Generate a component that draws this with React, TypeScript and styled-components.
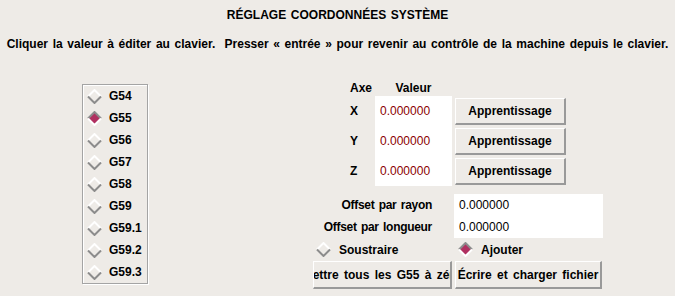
import * as React from 'react'
import styled, { createGlobalStyle } from 'styled-components'

const GlobalStyle = createGlobalStyle`
  html, body {
    margin: 0;
    padding: 0;
    background: #eeebe7;
  }
  body {
    font-family: "Liberation Sans", Arial, sans-serif;
    font-size: 12px;
    font-weight: bold;
    word-spacing: 1.3px;
    color: #000;
  }
`

const Page = styled.div`
  width: 675px;
  height: 296px;
  overflow: hidden;
  background: #eeebe7;
`
const Title = styled.div`
  padding-top: 7px;
  line-height: 16px;
  text-align: center;
`
const Hint = styled.div`
  margin-top: 13px;
  line-height: 16px;
  text-align: center;
  white-space: nowrap;
`
const Main = styled.div`
  display: flex;
  align-items: flex-start;
  margin-top: 27px;
  padding-left: 82px;
`
const SystemBox = styled.div`
  margin-top: 5px;
  width: 64px;
  height: 198px;
  display: flex;
  flex-direction: column;
  border: 1px solid #a4a4a4;
  box-shadow: inset 1px 1px 0 #fff, 1px 1px 0 #fff;
`
const SystemItem = styled.div`
  height: 22px;
  display: flex;
  align-items: center;
  gap: 7px;
  padding-left: 4px;
  white-space: nowrap;
`
const Right = styled.div`
  margin-left: 165px;
  width: 290px;
  display: flex;
  flex-direction: column;
`
const AxisTable = styled.div`
  margin-left: 32px;
  display: grid;
  grid-template-columns: 30px 77px 114px;
  grid-template-rows: 17px repeat(3, 30px);
`
const Head = styled.div<{ $align?: string }>`
  display: flex;
  align-items: center;
  justify-content: ${p => p.$align || 'center'};
  padding-left: ${p => (p.$align ? '5px' : '0')};
`
const AxisLabel = styled.div`
  display: flex;
  align-items: center;
  padding-left: 5px;
`
const ValueCell = styled.div<{ $color?: string }>`
  background: #fff;
  display: flex;
  align-items: center;
  padding-left: 5px;
  font-weight: normal;
  word-spacing: normal;
  color: ${p => p.$color || '#000'};
`
const ButtonCell = styled.div`
  display: flex;
  align-items: center;
  padding-left: 3px;
`
const Button = styled.button<{ $width: number; $height: number }>`
  width: ${p => p.$width}px;
  height: ${p => p.$height}px;
  padding: 0;
  margin: 0;
  display: flex;
  align-items: center;
  justify-content: center;
  overflow: hidden;
  white-space: nowrap;
  font: inherit;
  word-spacing: 2px;
  color: #000;
  background: #eeebe7;
  border-style: solid;
  border-width: 1px 2px 2px 1px;
  border-color: #fff #999 #999 #fff;
  box-sizing: border-box;
`
const ButtonText = styled.span`
  flex: none;
`
const OffsetTable = styled.div`
  margin-top: 8px;
  display: grid;
  grid-template-columns: 139px 2px 149px;
  grid-template-rows: 22px 22px;
`
const OffsetLabel = styled.div`
  display: flex;
  align-items: center;
  justify-content: flex-end;
  padding-right: 20px;
  letter-spacing: -0.3px;
  white-space: nowrap;
`
const Gap = styled.div``
const ModeRow = styled.div`
  height: 23px;
  display: grid;
  grid-template-columns: 142px 148px;
`
const ModeOption = styled.div`
  display: flex;
  align-items: center;
  gap: 8px;
  padding-left: 3px;
`
const ActionRow = styled.div`
  height: 28px;
  display: flex;
  gap: 3px;
`

const Diamond = ({ selected }: { selected?: boolean }) => (
  <svg width="15" height="15" viewBox="0 0 15 15" style={{ flex: 'none' }}>
    <polygon
      points="7.5,1 14,7.5 7.5,14 1,7.5"
      fill={selected ? '#b03060' : '#eeebe7'}
    />
    <polyline
      points="1,7.5 7.5,1 14,7.5"
      fill="none"
      stroke={selected ? '#8c8c8c' : '#fff'}
      strokeWidth="2"
    />
    <polyline
      points="1,7.5 7.5,14 14,7.5"
      fill="none"
      stroke={selected ? '#fff' : '#8c8c8c'}
      strokeWidth="2"
    />
  </svg>
)

const systems = ['G54', 'G55', 'G56', 'G57', 'G58', 'G59', 'G59.1', 'G59.2', 'G59.3']
const axes = ['X', 'Y', 'Z']

export default function App() {
  return (
    <Page>
      <GlobalStyle />
      <Title>RÉGLAGE COORDONNÉES SYSTÈME</Title>
      <Hint>
        Cliquer la valeur à éditer au clavier.&nbsp; Presser « entrée » pour revenir au contrôle de
        la machine depuis le clavier.
      </Hint>
      <Main>
        <SystemBox>
          {systems.map(s => (
            <SystemItem key={s}>
              <Diamond selected={s === 'G55'} />
              {s}
            </SystemItem>
          ))}
        </SystemBox>
        <Right>
          <AxisTable>
            <Head $align="flex-start">Axe</Head>
            <Head>Valeur</Head>
            <Gap />
            {axes.map(a => (
              <React.Fragment key={a}>
                <AxisLabel>{a}</AxisLabel>
                <ValueCell $color="#8b0000">0.000000</ValueCell>
                <ButtonCell>
                  <Button $width={111} $height={27}>
                    <ButtonText>Apprentissage</ButtonText>
                  </Button>
                </ButtonCell>
              </React.Fragment>
            ))}
          </AxisTable>
          <OffsetTable>
            <OffsetLabel>Offset par rayon</OffsetLabel>
            <Gap />
            <ValueCell>0.000000</ValueCell>
            <OffsetLabel>Offset par longueur</OffsetLabel>
            <Gap />
            <ValueCell>0.000000</ValueCell>
          </OffsetTable>
          <ModeRow>
            <ModeOption>
              <Diamond />
              Soustraire
            </ModeOption>
            <ModeOption>
              <Diamond selected />
              Ajouter
            </ModeOption>
          </ModeRow>
          <ActionRow>
            <Button $width={139} $height={28}>
              <ButtonText>Mettre tous les G55 à zéro</ButtonText>
            </Button>
            <Button $width={147} $height={28}>
              <ButtonText>Écrire et charger fichier</ButtonText>
            </Button>
          </ActionRow>
        </Right>
      </Main>
    </Page>
  )
}
